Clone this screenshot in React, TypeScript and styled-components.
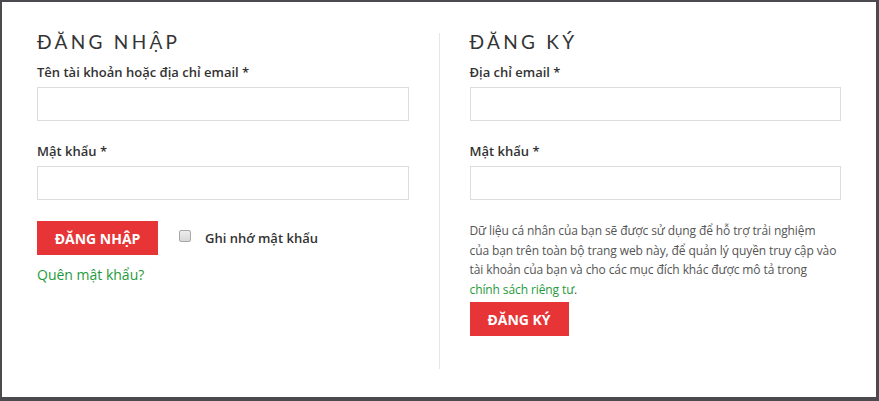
import styled, { createGlobalStyle } from 'styled-components';

const GlobalStyle = createGlobalStyle`
  html, body {
    margin: 0;
    padding: 0;
    background: #4b4b4f;
  }
  * {
    box-sizing: border-box;
  }
`;

const Backdrop = styled.div`
  width: 879px;
  height: 401px;
  padding: 2px 3px 4px 2px;
  background: #4b4b4f;
`;

const Modal = styled.div`
  height: 100%;
  background: #fff;
  display: flex;
  font-family: 'Open Sans', 'Liberation Sans', sans-serif;
  color: #333;
`;

const Column = styled.div<{ $right?: boolean }>`
  flex: 1;
  padding: ${(p) => (p.$right ? '0 35px 0 30px' : '0 30px 0 35px')};
  margin: 31px 0 28px;
  ${(p) => (p.$right ? 'border-left: 1px solid #e6e6e6;' : '')}
`;

const Title = styled.h2`
  margin: 0 0 12px;
  font-family: 'Lato', 'Open Sans', sans-serif;
  font-weight: 400;
  font-size: 19px;
  letter-spacing: 3.3px;
  line-height: 18px;
  color: #333;
`;

const Label = styled.label`
  display: block;
  font-size: 13px;
  font-weight: 600;
  line-height: 18px;
  color: #333;
  margin-bottom: 6px;
`;

const Field = styled.div`
  margin-bottom: 21px;
`;

const Input = styled.input`
  display: block;
  width: 100%;
  height: 34px;
  border: 1px solid #dcdcdc;
  background: #fff;
  outline: none;
  padding: 0 10px;
`;

const Actions = styled.div`
  display: flex;
  align-items: center;
`;

const Button = styled.button<{ $width: number }>`
  width: ${(p) => p.$width}px;
  height: 34px;
  border: none;
  padding: 0;
  background: #e63437;
  color: #fff;
  font-family: 'Open Sans', 'Liberation Sans', sans-serif;
  font-weight: 700;
  font-size: 14px;
  text-transform: uppercase;
  cursor: pointer;
`;

const Remember = styled.label`
  display: flex;
  align-items: center;
  margin-left: 21px;
  font-size: 13px;
  font-weight: 600;
  color: #333;
`;

const Check = styled.span`
  width: 12px;
  height: 12px;
  border: 1px solid #a8a8a8;
  border-radius: 2px;
  background: linear-gradient(#ececec, #d8d8d8);
  margin-right: 14px;
  margin-top: -4px;
`;

const Lost = styled.a`
  display: block;
  margin-top: 10px;
  font-size: 14px;
  color: #1f9a3a;
  text-decoration: none;
`;

const Privacy = styled.p`
  margin: 0 0 3px;
  font-size: 12px;
  line-height: 19.5px;
  letter-spacing: -0.1px;
  white-space: nowrap;
  color: #555;
`;

const Green = styled.a`
  color: #1f9a3a;
  text-decoration: none;
`;

export default function App() {
  return (
    <>
      <GlobalStyle />
      <Backdrop>
        <Modal>
          <Column>
            <Title>ĐĂNG NHẬP</Title>
            <Field>
              <Label>Tên tài khoản hoặc địa chỉ email *</Label>
              <Input type="text" />
            </Field>
            <Field>
              <Label>Mật khẩu *</Label>
              <Input type="password" />
            </Field>
            <Actions>
              <Button $width={121}>Đăng nhập</Button>
              <Remember>
                <Check />
                Ghi nhớ mật khẩu
              </Remember>
            </Actions>
            <Lost href="#">Quên mật khẩu?</Lost>
          </Column>
          <Column $right>
            <Title>ĐĂNG KÝ</Title>
            <Field>
              <Label>Địa chỉ email *</Label>
              <Input type="email" />
            </Field>
            <Field>
              <Label>Mật khẩu *</Label>
              <Input type="password" />
            </Field>
            <Privacy>
              Dữ liệu cá nhân của bạn sẽ được sử dụng để hỗ trợ trải nghiệm
              <br />
              của bạn trên toàn bộ trang web này, để quản lý quyền truy cập vào
              <br />
              tài khoản của bạn và cho các mục đích khác được mô tả trong
              <br />
              <Green href="#">chính sách riêng tư</Green>.
            </Privacy>
            <Button $width={99}>Đăng ký</Button>
          </Column>
        </Modal>
      </Backdrop>
    </>
  );
}
